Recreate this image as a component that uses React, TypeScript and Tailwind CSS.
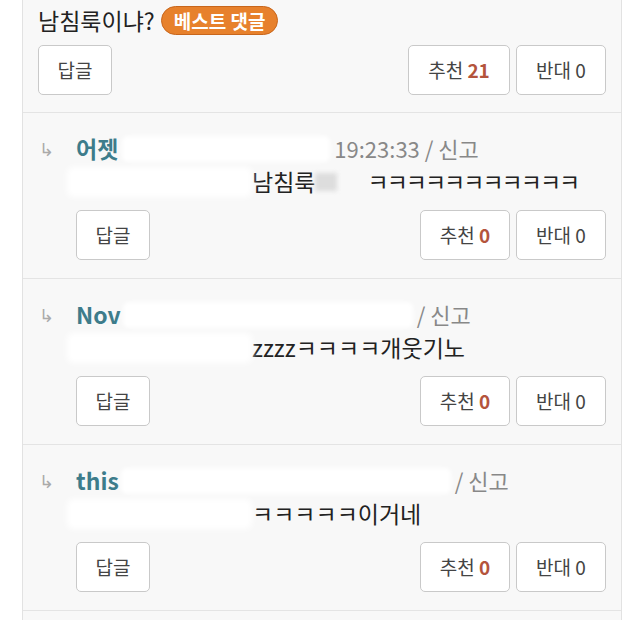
import React from "react";

const font = { fontFamily: '"Noto Sans CJK KR", Roboto, "Noto Sans", sans-serif' };

function Btn({ children, w }: { children: React.ReactNode; w: string }) {
  return (
    <div
      className={`flex h-[50px] ${w} items-center justify-center rounded-[5px] border-[1.5px] border-[#c9c9c9] bg-white text-[19px] text-[#444]`}
    >
      {children}
    </div>
  );
}

function Reco({ n }: { n: string }) {
  return (
    <span>
      추천 <span className="font-bold text-[#b4543c]">{n}</span>
    </span>
  );
}

function Reply({
  name,
  nameGap,
  meta,
  text,
}: {
  name: string;
  nameGap: string;
  meta: string;
  text: React.ReactNode;
}) {
  return (
    <div className="border-b-[1.5px] border-[#e4e4e4] pb-[18px] pl-[16px] pr-[15px] pt-[19px]">
      <div className="flex h-[33px] items-center">
        <span className="w-[37px] text-[18px] text-[#aaa]">↳</span>
        <span className="text-[23px] font-semibold text-[#3d7c8b]">{name}</span>
        <div className={`h-[26px] ${nameGap} rounded-md bg-white blur-[2px]`} />
        <span className="text-[22px] text-[#888]">{meta}</span>
      </div>
      <div className="flex h-[33px] items-center">
        <div className="ml-[28px] h-[30px] w-[185px] rounded-md bg-white blur-[3px]" />
        <span className="text-[23px] text-[#222]">{text}</span>
      </div>
      <div className="mt-[12px] flex items-center pl-[37px]">
        <Btn w="w-[74px]">답글</Btn>
        <div className="flex-1" />
        <div className="flex gap-[6px]">
          <Btn w="w-[90px]">
            <Reco n="0" />
          </Btn>
          <Btn w="w-[90px]">반대 0</Btn>
        </div>
      </div>
    </div>
  );
}

export default function App() {
  return (
    <div className="h-[620px] w-[640px] overflow-hidden bg-white" style={font}>
      <div className="ml-[22px] h-full w-[600px] border-x-[1.5px] border-[#e2e2e2] bg-[#f8f8f8]">
        <div className="h-[113px] border-b-[1.5px] border-[#e4e4e4] pl-[15px] pr-[15px]">
          <div className="flex h-[40px] items-center pt-[1px]">
            <span className="text-[23px] text-[#222]">남침룩이냐?</span>
            <span className="ml-[6px] rounded-full border-[1.5px] border-[#c8661c] bg-[#e7812c] px-[12px] py-[1px] text-[19px] font-bold leading-[25px] text-white">
              베스트 댓글
            </span>
          </div>
          <div className="mt-[5px] flex items-center">
            <Btn w="w-[74px]">답글</Btn>
            <div className="flex-1" />
            <div className="flex gap-[6px]">
              <Btn w="w-[102px]">
                <Reco n="21" />
              </Btn>
              <Btn w="w-[90px]">반대 0</Btn>
            </div>
          </div>
        </div>
        <Reply
          name="어젯"
          nameGap="w-[208px] ml-[4px] mr-[4px]"
          meta="19:23:33 / 신고"
          text={
            <span className="flex items-center">
              남침룩
              <span className="inline-block h-[18px] w-[22px] bg-[#ddd] blur-[2px]" />
              <span className="inline-block w-[30px]" />
              <span className="tracking-[-2px]">ㅋㅋㅋㅋㅋㅋㅋㅋㅋㅋㅋ</span>
            </span>
          }
        />
        <Reply name="Nov" nameGap="w-[290px] ml-[2px] mr-[4px]" meta="/ 신고" text="zzzzㅋㅋㅋㅋ개웃기노" />
        <Reply name="this" nameGap="w-[330px] ml-[2px] mr-[4px]" meta="/ 신고" text="ㅋㅋㅋㅋㅋ이거네" />
      </div>
    </div>
  );
}
